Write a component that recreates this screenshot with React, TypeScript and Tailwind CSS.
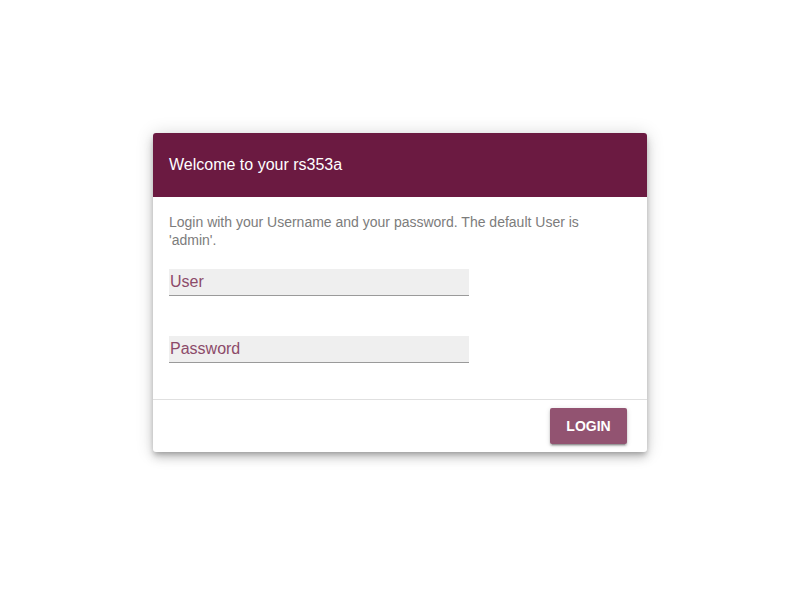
export default function App() {
  return (
    <main className="flex min-h-screen items-center justify-center bg-white px-4 pb-4 font-['Liberation_Sans',Arial,sans-serif]">
      <form className="w-full max-w-[494px] overflow-hidden rounded-[3px] bg-white shadow-[0_3px_5px_-1px_rgba(0,0,0,0.22),0_6px_10px_rgba(0,0,0,0.15),0_1px_18px_rgba(0,0,0,0.16)]">
        <header className="flex h-16 items-center bg-[#6b1a41] px-4">
          <h1 className="text-base text-white">Welcome to your rs353a</h1>
        </header>
        <div className="px-4 pt-4 pb-9">
          <p className="max-w-[440px] text-sm leading-[18px] text-[#7c7c7c]">
            Login with your Username and your password. The default User is 'admin'.
          </p>
          <div className="mt-5 flex flex-col gap-10">
            <input
              type="text"
              aria-label="User"
              placeholder="User"
              className="h-[27px] w-[300px] max-w-full border-b border-[#9a9a9a] bg-[#efefef] px-px text-base text-[#6b1a41] outline-none placeholder:text-[#8c4a69]"
            />
            <input
              type="password"
              aria-label="Password"
              placeholder="Password"
              className="h-[27px] w-[300px] max-w-full border-b border-[#9a9a9a] bg-[#efefef] px-px text-base text-[#6b1a41] outline-none placeholder:text-[#8c4a69]"
            />
          </div>
        </div>
        <footer className="flex justify-end border-t border-[#e0e0e0] py-2 pr-5">
          <button
            type="button"
            className="h-9 w-[77px] rounded-[2px] bg-[#925371] text-sm font-bold text-white shadow-[0_3px_1px_-2px_rgba(0,0,0,0.2),0_2px_2px_rgba(0,0,0,0.2),0_1px_5px_rgba(0,0,0,0.15)]"
          >
            LOGIN
          </button>
        </footer>
      </form>
    </main>
  );
}
